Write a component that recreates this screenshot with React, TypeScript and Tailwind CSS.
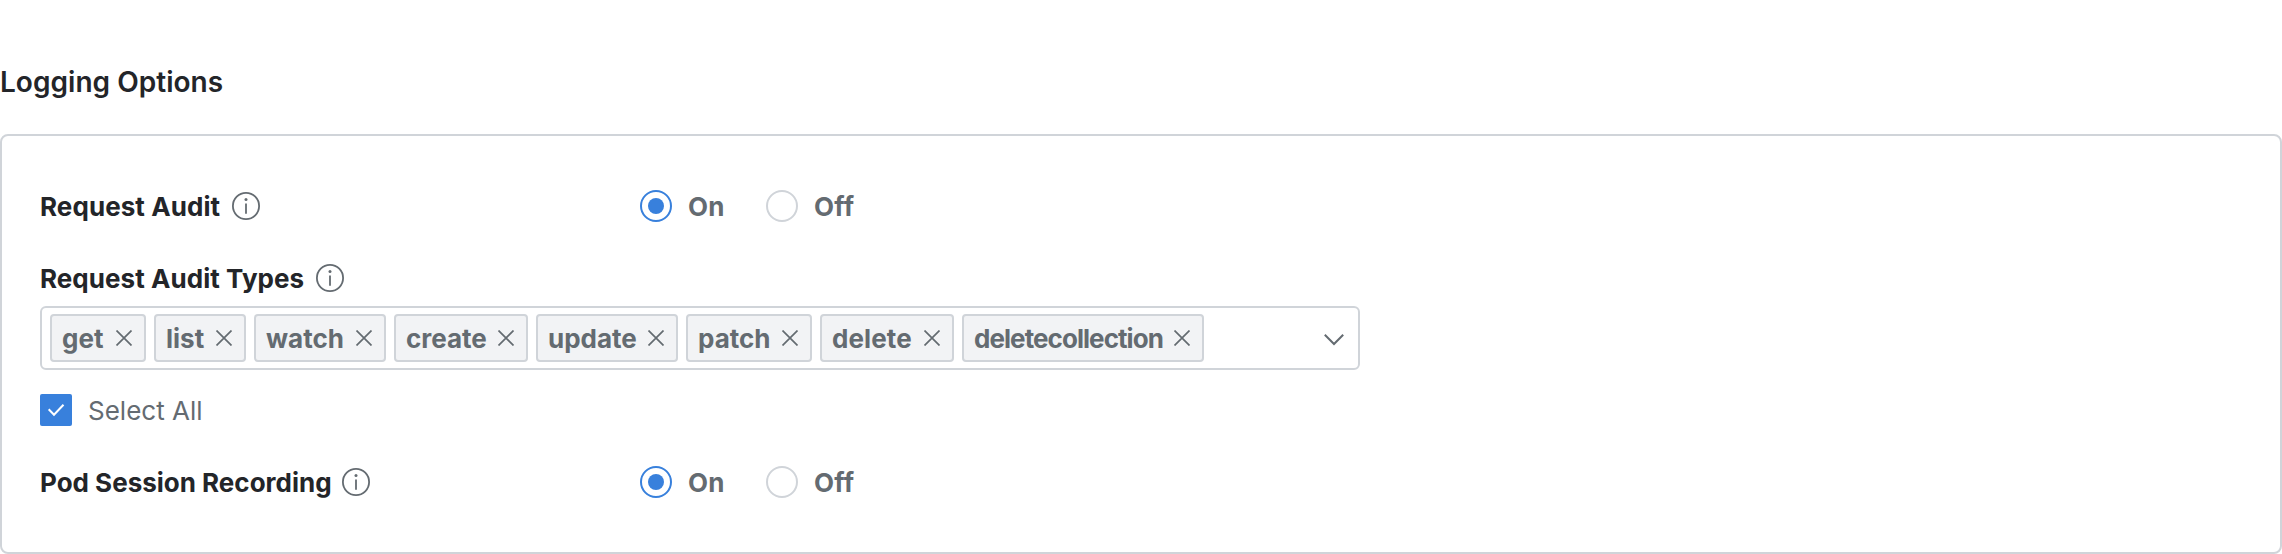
const Info = () => (
  <svg className="h-7 w-7 shrink-0" viewBox="0 0 28 28" fill="none" stroke="#646b71" strokeWidth="1.8">
    <circle cx="14" cy="14" r="13.1" />
    <path d="M14 11.6V21.8" />
    <circle cx="14" cy="7.6" r="1.5" fill="#646b71" stroke="none" />
  </svg>
);

const Radio = ({ on, label }: { on?: boolean; label: string }) => (
  <div className="flex h-8 items-center">
    <span className={on ? "flex h-8 w-8 items-center justify-center rounded-full border-2 border-[#3880dc]" : "h-8 w-8 rounded-full border-2 border-[#d0d4d9]"}>
      {on && <span className="h-4 w-4 rounded-full bg-[#3880dc]" />}
    </span>
    <span className="ml-4 pt-px tracking-[0.2px] text-[#646b71]">{label}</span>
  </div>
);

const OptionRow = ({ title, titleClass }: { title: string; titleClass: string }) => (
  <div className="flex h-8 items-center font-bold">
    <div className="flex w-[600px] items-center">
      <span className={titleClass}>{title}</span>
      <Info />
    </div>
    <div className="flex gap-[41.4px]">
      <Radio on label="On" />
      <Radio label="Off" />
    </div>
  </div>
);

const types = [
  { name: "get", width: "w-[96px]" },
  { name: "list", width: "w-[92px]" },
  { name: "watch", width: "w-[132px]" },
  { name: "create", width: "w-[134px]" },
  { name: "update", width: "w-[142px]" },
  { name: "patch", width: "w-[126px]" },
  { name: "delete", width: "w-[134px] tracking-[0.1px]" },
  { name: "deletecollection", width: "w-[242px] tracking-[-0.94px]" },
];

export default function App() {
  return (
    <div className="h-[554px] overflow-hidden bg-white pt-[62px] font-['Inter',sans-serif] text-[26px] leading-[31px] text-[#232529]">
      <h2 className="h-10 text-[28px] leading-10 font-semibold tracking-[0.03px]">Logging Options</h2>
      <section className="mt-8 h-[420px] rounded-lg border-2 border-[#d0d4d9] px-[38px] pt-[54px]">
        <OptionRow title="Request Audit" titleClass="w-[192px] pt-px tracking-[0.08px] whitespace-nowrap" />
        <div className="mt-10 flex h-8 items-center font-bold">
          <span className="w-[276px] pt-px tracking-[0.06px] whitespace-nowrap">Request Audit Types</span>
          <Info />
        </div>
        <div className="mt-3 flex h-16 w-[1320px] items-center gap-2 rounded-md border-2 border-[#d0d4d9] pr-3 pl-2">
          {types.map(({ name, width }) => (
            <span key={name} className={`flex h-12 shrink-0 items-center justify-between rounded border-2 border-[#d0d4d9] bg-[#f2f3f5] pr-3 pl-[10px] font-bold text-[#646b71] ${width}`}>
              <span className="pt-px">{name}</span>
              <svg className="h-4 w-4 shrink-0" viewBox="0 0 16 16" stroke="#646b71" strokeWidth="1.7">
                <path d="M0.5 0.5L15.5 15.5M15.5 0.5L0.5 15.5" />
              </svg>
            </span>
          ))}
          <svg className="ml-auto h-6 w-6" viewBox="0 0 24 24" fill="none" stroke="#646b71" strokeWidth="2">
            <path d="M2.8 8.8L12 18L21.2 8.8" />
          </svg>
        </div>
        <div className="mt-6 flex h-8 items-center gap-4 text-[#646b71]">
          <span className="flex h-8 w-8 items-center justify-center rounded-xs bg-[#3880dc]">
            <svg className="h-8 w-8" viewBox="0 0 32 32" fill="none" stroke="white" strokeWidth="2">
              <path d="M8.7 15.2L14 20.8L23.5 10.7" />
            </svg>
          </span>
          <span className="pt-px font-normal">Select All</span>
        </div>
        <div className="mt-10">
          <OptionRow title="Pod Session Recording" titleClass="w-[302px] pt-px whitespace-nowrap" />
        </div>
      </section>
    </div>
  );
}
